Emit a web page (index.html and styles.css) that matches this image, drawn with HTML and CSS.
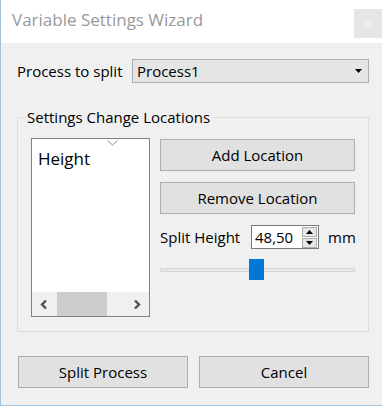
FILE: index.html
```html
<!DOCTYPE html>
<html>
<head>
<meta charset="utf-8">
<link rel="stylesheet" href="styles.css">
</head>
<body>
<div class="window">
  <div class="titlebar">
    <span class="title">Variable Settings Wizard</span>
    <span class="close">×</span>
  </div>
  <div class="content">
    <div class="row-process">
      <span class="label">Process to split</span>
      <div class="combo">
        <span>Process1</span>
        <svg class="combo-arrow" width="7" height="4" viewBox="0 0 7 4"><path d="M0 0H7L3.5 4Z" fill="#000"/></svg>
      </div>
    </div>
    <fieldset class="group">
      <legend>Settings Change Locations</legend>
      <div class="group-inner">
        <div class="list">
          <svg class="sort" width="11" height="6" viewBox="0 0 11 6"><path d="M0.5 0.5L5.5 5L10.5 0.5" fill="none" stroke="#8a8a8a" stroke-width="1"/></svg>
          <div class="list-item">Height</div>
          <div class="hscroll">
            <svg class="sb-arrow" width="8" height="11" viewBox="0 0 8 11"><path d="M6 1.5L2 5.5L6 9.5" fill="none" stroke="#505050" stroke-width="2.4"/></svg>
            <div class="sb-track"><div class="sb-thumb"></div></div>
            <svg class="sb-arrow" width="8" height="11" viewBox="0 0 8 11"><path d="M2 1.5L6 5.5L2 9.5" fill="none" stroke="#505050" stroke-width="2.4"/></svg>
          </div>
        </div>
        <div class="controls">
          <button class="btn">Add Location</button>
          <button class="btn">Remove Location</button>
          <div class="spin-row">
            <span class="label">Split Height</span>
            <div class="spin">
              <span class="spin-value">48,50</span>
              <div class="spin-btns">
                <div class="spin-btn"><svg width="7" height="4" viewBox="0 0 7 4"><path d="M0 4H7L3.5 0Z" fill="#000"/></svg></div>
                <div class="spin-btn"><svg width="7" height="4" viewBox="0 0 7 4"><path d="M0 0H7L3.5 4Z" fill="#000"/></svg></div>
              </div>
            </div>
            <span class="label unit">mm</span>
          </div>
          <div class="slider">
            <div class="groove"></div>
            <div class="thumb" style="left: 89px"></div>
          </div>
        </div>
      </div>
    </fieldset>
    <div class="footer">
      <button class="btn btn-footer">Split Process</button>
      <button class="btn btn-footer">Cancel</button>
    </div>
  </div>
</div>
</body>
</html>
```

FILE: styles.css
```css
* { box-sizing: border-box; }
html, body { margin: 0; padding: 0; }
body {
  width: 382px;
  height: 406px;
  overflow: hidden;
  font-family: "Open Sans", "Noto Sans", sans-serif;
  font-size: 15px;
  color: #000;
  background: #f0f0f0;
}
.window {
  width: 382px;
  height: 406px;
  overflow: hidden;
  border-left: 1px solid #9fc3de;
  border-bottom: 1px solid #9fc3de;
  background: #f0f0f0;
  display: flex;
  flex-direction: column;
}
.titlebar {
  height: 43px;
  flex: none;
  background: #fff;
  display: flex;
  align-items: flex-start;
  justify-content: space-between;
}
.title {
  margin: 8px 0 0 11px;
  font-size: 17px;
  color: #999;
  line-height: 24px;
}
.close {
  margin-top: 9px;
  width: 28px;
  height: 29px;
  background: #e6e6e6;
  color: #f7f7f7;
  font-size: 14px;
  display: flex;
  align-items: center;
  justify-content: center;
}
.content {
  padding: 16px 13px 0 16px;
  display: flex;
  flex-direction: column;
}
.row-process {
  display: flex;
  align-items: center;
  height: 24px;
}
.label { white-space: nowrap; flex: none; }
.row-process .label { width: 115px; }
.combo {
  flex: 1;
  min-width: 0;
  height: 24px;
  background: #e5e5e5;
  border: 1px solid #adadad;
  display: flex;
  align-items: center;
  justify-content: space-between;
  padding: 0 6px 0 4px;
}
.group {
  margin: 24px 0 0 0;
  padding: 11px 13px 0 13px;
  border: 1px solid #dcdcdc;
  height: 225px;
  min-width: 0;
}
.group legend {
  padding: 0 2px;
  margin-left: -6px;
  line-height: 20px;
}
.group-inner {
  display: flex;
  gap: 10px;
}
.list {
  position: relative;
  flex: none;
  width: 119px;
  height: 179px;
  background: #fff;
  border: 1px solid #828282;
  display: flex;
  flex-direction: column;
}
.sort {
  position: absolute;
  left: 75px;
  top: 1px;
}
.list-item {
  flex: 1;
  padding: 8px 0 0 6px;
  font-size: 17px;
  line-height: 24px;
}
.hscroll {
  height: 24px;
  background: #f0f0f0;
  display: flex;
  align-items: center;
}
.sb-arrow { margin: 0 9px 0 8px; flex: none; }
.hscroll .sb-arrow:last-child { margin: 0 8px 0 9px; }
.sb-track {
  flex: 1;
  height: 24px;
  display: flex;
}
.sb-thumb {
  width: 50px;
  height: 24px;
  background: #cdcdcd;
}
.controls {
  flex: 1;
  min-width: 0;
  display: flex;
  flex-direction: column;
  padding-top: 1px;
}
.btn {
  font-family: inherit;
  font-size: 15px;
  color: #000;
  background: #e1e1e1;
  border: 1px solid #adadad;
  height: 32px;
  padding: 0;
  border-radius: 0;
}
.controls .btn + .btn { margin-top: 11px; }
.spin-row {
  margin-top: 11px;
  display: flex;
  align-items: center;
  height: 24px;
}
.spin-row .label { width: 91px; }
.spin {
  width: 68px;
  flex: none;
  height: 24px;
  background: #fff;
  border: 1px solid #7a7a7a;
  display: flex;
  align-items: center;
  justify-content: space-between;
  padding-left: 3px;
}
.spin-value { font-size: 15px; }
.spin-btns {
  display: flex;
  flex-direction: column;
  gap: 1px;
  margin-right: 1px;
}
.spin-btn {
  width: 15px;
  height: 10px;
  background: #e6e6e6;
  border: 1px solid #adadad;
  display: flex;
  align-items: center;
  justify-content: center;
}
.unit { margin-left: 9px; }
.slider {
  position: relative;
  height: 21px;
  margin-top: 10px;
  display: flex;
  align-items: center;
}
.groove {
  width: 100%;
  height: 4px;
  background: #e7e7e7;
  border: 1px solid #d6d6d6;
}
.thumb {
  position: absolute;
  top: 0;
  width: 15px;
  height: 21px;
  background: #0078d7;
}
.footer {
  margin-top: 24px;
  display: flex;
  gap: 11px;
  padding-left: 1px;
}
.btn-footer {
  flex: 1;
  height: 32px;
}
```
